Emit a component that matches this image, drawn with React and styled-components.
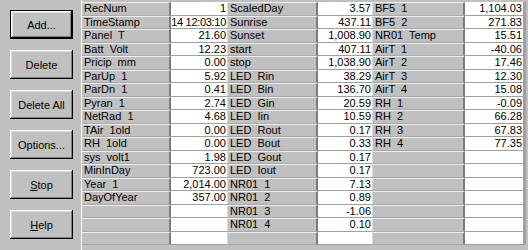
import React from "react"
import styled, { createGlobalStyle } from "styled-components"

const GlobalStyle = createGlobalStyle`
  html, body {
    margin: 0;
    padding: 0;
    background: #c0c0c0;
  }
  #root {
    width: 528px;
    height: 250px;
    overflow: hidden;
  }
`

const Window = styled.div`
  display: flex;
  width: 528px;
  height: 250px;
  background: #c0c0c0;
  font-family: "Liberation Sans", Arial, sans-serif;
  font-size: 11px;
  color: #000;
`

const ButtonPanel = styled.div`
  width: 82px;
  flex: none;
  display: flex;
  flex-direction: column;
  gap: 11px;
  padding: 10px 0 0 10px;
  box-sizing: border-box;
  border-right: 1px solid #ffffff;
`

const Button = styled.button`
  width: 63px;
  height: 29px;
  padding: 0;
  background: #c0c0c0;
  font-family: inherit;
  font-size: 11px;
  color: #000;
  border: ${p => (p.$default ? "1px solid #000" : "none")};
  box-shadow:
    inset -1px -1px #000,
    inset 1px 1px #fff,
    inset -2px -2px #808080,
    inset 2px 2px #dfdfdf;
  u {
    text-decoration: underline;
  }
`

const Grid = styled.div`
  flex: none;
  margin-top: 2px;
  width: 444px;
  height: 243px;
  display: grid;
  grid-template-columns: 89px 57px 90px 55px 92px 59px;
  grid-auto-rows: 13.5px;
  background: #a0a0a0;
`

const Label = styled.div`
  background: #c0c0c0;
  border-top: 1px solid #eeeeee;
  border-bottom: 1px solid #a8a8a8;
  border-right: 2px solid #7c7c7c;
  padding-left: 2px;
  white-space: pre;
  overflow: hidden;
  line-height: 11px;
  box-sizing: border-box;
`

const Value = styled.div`
  display: flex;
  justify-content: flex-end;
  background: #ffffff;
  border-bottom: 1px solid #a0a0a0;
  border-right: 1px solid ${p => (p.$last ? "#a0a0a0" : "#d8d8d8")};
  padding-right: 1px;
  white-space: pre;
  overflow: hidden;
  line-height: 12px;
  letter-spacing: ${p => (p.$tight ? "-0.3px" : "normal")};
  box-sizing: border-box;
`

const col1 = [
  ["RecNum", "1"],
  ["TimeStamp", "14 12:03:10"],
  ["Panel  T", "21.60"],
  ["Batt  Volt", "12.23"],
  ["Pricip  mm", "0.00"],
  ["ParUp  1", "5.92"],
  ["ParDn  1", "0.41"],
  ["Pyran  1", "2.74"],
  ["NetRad  1", "4.68"],
  ["TAir  1old", "0.00"],
  ["RH  1old", "0.00"],
  ["sys  volt1", "1.98"],
  ["MinInDay", "723.00"],
  ["Year  1", "2,014.00"],
  ["DayOfYear", "357.00"],
]

const col2 = [
  ["ScaledDay", "3.57"],
  ["Sunrise", "437.11"],
  ["Sunset", "1,008.90"],
  ["start", "407.11"],
  ["stop", "1,038.90"],
  ["LED  Rin", "38.29"],
  ["LED  Bin", "136.70"],
  ["LED  Gin", "20.59"],
  ["LED  Iin", "10.59"],
  ["LED  Rout", "0.17"],
  ["LED  Bout", "0.33"],
  ["LED  Gout", "0.17"],
  ["LED  Iout", "0.17"],
  ["NR01  1", "7.13"],
  ["NR01  2", "0.89"],
  ["NR01  3", "-1.06"],
  ["NR01  4", "0.10"],
]

const col3 = [
  ["BF5  1", "1,104.03"],
  ["BF5  2", "271.83"],
  ["NR01  Temp", "15.51"],
  ["AirT  1", "-40.06"],
  ["AirT  2", "17.46"],
  ["AirT  3", "12.30"],
  ["AirT  4", "15.08"],
  ["RH  1", "-0.09"],
  ["RH  2", "66.28"],
  ["RH  3", "67.83"],
  ["RH  4", "77.35"],
]

const ROWS = 18

export default function App() {
  const cols = [col1, col2, col3]
  const cells = []
  for (let r = 0; r < ROWS; r++) {
    cols.forEach((col, c) => {
      const [label, value] = col[r] || ["", ""]
      cells.push(<Label key={`l${r}-${c}`}>{label}</Label>)
      cells.push(
        <Value key={`v${r}-${c}`} $last={c === 2} $tight={value.length > 9}>
          <span>{value}</span>
        </Value>
      )
    })
  }

  return (
    <>
      <GlobalStyle />
      <Window>
        <ButtonPanel>
          <Button $default>Add...</Button>
          <Button>Delete</Button>
          <Button>Delete All</Button>
          <Button>Options...</Button>
          <Button><u>S</u>top</Button>
          <Button><u>H</u>elp</Button>
        </ButtonPanel>
        <Grid>{cells}</Grid>
      </Window>
    </>
  )
}
